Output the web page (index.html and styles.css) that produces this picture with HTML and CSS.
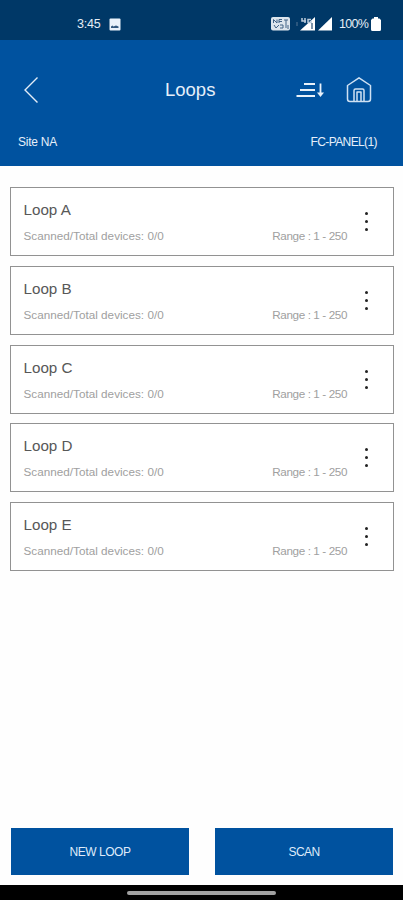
FILE: index.html
```
<!DOCTYPE html>
<html lang="en">
<head>
<meta charset="utf-8">
<title>Loops</title>
<link rel="stylesheet" href="styles.css">
</head>
<body>
<div class="status">
  <span class="time">3:45</span>
  <svg class="photo" width="12" height="13" viewBox="0 0 12 13"><rect x=".5" y=".5" width="11" height="12" rx="1" fill="#e9f1fa"/><path d="M2 10V8.500l1.500-1 1 1L7 7.500l2.500 1V10z" fill="#33587f"/></svg>
  <svg class="signals" width="62" height="16" viewBox="0 0 62 16">
    <rect x="0" y="1" width="19" height="13.500" rx="2" fill="#dce5ed"/>
    <path d="M2.500 7V3.500L6 7V3.500M8 7V3.500h3M8 5.500h3M13 4h4M15 4v8M3 9l2 3 3-3M9 9h3v3H9M17 9v4" fill="none" stroke="#416286" stroke-width="1"/>
    <path d="M26 6v4" stroke="#547594"/>
    <path d="M29 14.500L44 1v13.500z" fill="#fff"/>
    <path d="M31 2v3h4M34 2v5M40 3.500h-3v3h3V5" fill="none" stroke="#bdcddd" stroke-width="1.500"/>
    <path d="M41 7v6" stroke="#52718e" stroke-width="1.500"/>
    <path d="M47 14.500L61 1v13.500z" fill="#fff"/>
  </svg>
  <span class="percent">100%</span>
  <svg class="battery" width="10" height="14" viewBox="0 0 10 14"><path d="M3 0h4v1.500h1.500L10 3v9.500Q10 14 8.500 14h-7Q0 14 0 12.500V3l1.500-1.500H3z" fill="#fff"/></svg>
</div>
<header class="header">
  <div class="bar">
    <svg class="back" width="16" height="28" viewBox="0 0 16 28"><path d="M14.500 1.500L2 14l12.500 12.500" fill="none" stroke="#e3edf8" stroke-width="1.400"/></svg>
    <h1 class="title">Loops</h1>
    <svg class="sort" width="30" height="18" viewBox="0 0 30 18"><g fill="none" stroke="#e8f1fa" stroke-width="1.800"><path d="M8 3H19M4 9H19M.5 15H19M24.500 2.500v10"/></g><path d="M21 11.500h7L24.500 16z" fill="#e8f1fa"/></svg>
    <svg class="home" width="26" height="28" viewBox="0 0 26 28"><path d="M1.500 9.500L13 1.800 24.500 9.500V23q0 2.500-2.500 2.500H4Q1.500 25.500 1.500 23zM8 25.500v-11q0-1.500 1.500-1.500h7q1.500 0 1.500 1.500v11M11 25v-9h4v9" fill="none" stroke="#cfe1f3" stroke-width="1.500" stroke-linejoin="round"/></svg>
  </div>
  <div class="sub"><span class="site">Site NA</span><span class="panel">FC-PANEL(1)</span></div>
</header>
<main class="list">
  <section class="card"><div class="info"><h2>Loop A</h2><p><span class="devices">Scanned/Total devices: 0/0</span><span class="range">Range : 1 - 250</span></p></div><div class="menu"><i></i><i></i><i></i></div></section>
  <section class="card"><div class="info"><h2>Loop B</h2><p><span class="devices">Scanned/Total devices: 0/0</span><span class="range">Range : 1 - 250</span></p></div><div class="menu"><i></i><i></i><i></i></div></section>
  <section class="card"><div class="info"><h2>Loop C</h2><p><span class="devices">Scanned/Total devices: 0/0</span><span class="range">Range : 1 - 250</span></p></div><div class="menu"><i></i><i></i><i></i></div></section>
  <section class="card"><div class="info"><h2>Loop D</h2><p><span class="devices">Scanned/Total devices: 0/0</span><span class="range">Range : 1 - 250</span></p></div><div class="menu"><i></i><i></i><i></i></div></section>
  <section class="card"><div class="info"><h2>Loop E</h2><p><span class="devices">Scanned/Total devices: 0/0</span><span class="range">Range : 1 - 250</span></p></div><div class="menu"><i></i><i></i><i></i></div></section>
</main>
<footer class="actions"><button class="new">NEW LOOP</button><button class="scan">SCAN</button></footer>
<div class="nav"><div class="handle"></div></div>
</body>
</html>
```
FILE: styles.css
```
* { box-sizing: border-box; }
body {
  margin: 0;
  height: 900px;
  display: flex;
  flex-direction: column;
  overflow: hidden;
  background: #fefefe;
  font-family: "Liberation Sans", Arial, sans-serif;
}
h1, h2, p { margin: 0; font-weight: 400; }
svg { display: block; flex: none; }
span { white-space: nowrap; }
.status {
  height: 40px;
  flex: none;
  padding: 8px 22px 0 77px;
  display: flex;
  align-items: center;
  background: #003867;
  color: #e6eef6;
  font-size: 12.500px;
}
.time { width: 32px; letter-spacing: -0.200px; }
.signals { margin-left: auto; }
.percent { width: 32px; margin-left: 6px; font-size: 12.500px; letter-spacing: -0.700px; }
.header {
  height: 126px;
  flex: none;
  background: #00529f;
  color: #e6effa;
}
.bar {
  height: 100px;
  padding: 0 31px 0 23px;
  display: flex;
  align-items: center;
}
.title { margin-left: 126px; font-size: 18.500px; line-height: 24px; }
.sort { margin-left: auto; }
.home { margin-left: 20px; }
.sub {
  display: flex;
  justify-content: space-between;
  margin-top: -6px;
  padding: 0 26px 0 18px;
  font-size: 12px;
  line-height: 16px;
}
.site { letter-spacing: -0.250px; }
.panel { letter-spacing: -0.600px; }
.list {
  flex: 1;
  padding: 21px 9px 0 10px;
  display: flex;
  flex-direction: column;
  gap: 9.750px;
}
.card {
  height: 69px;
  flex: none;
  display: flex;
  border: 1px solid #929292;
  background: #fff;
}
.info { flex: 1; padding: 13px 0 0 12.500px; }
.info h2 { font-size: 15.200px; line-height: 18px; color: #585858; letter-spacing: 0; }
.info p {
  display: flex;
  justify-content: space-between;
  margin-top: 9px;
  font-size: 11.700px;
  line-height: 16px;
  color: #a0a0a0;
}
.devices { letter-spacing: 0.020px; }
.range { letter-spacing: -0.390px; }
.menu {
  width: 46px;
  padding: 24px 0 0 18px;
  display: flex;
  flex-direction: column;
  gap: 5px;
}
.menu i { width: 3px; height: 3px; border-radius: 50%; background: #222; }
.actions {
  height: 57px;
  flex: none;
  padding: 0 10px 10px 11px;
  display: grid;
  grid-template-columns: 178px 178px;
  justify-content: space-between;
}
button {
  height: 47px;
  padding: 0;
  border: 0;
  background: #00529f;
  color: #dfeafa;
  font: 12px/16px "Liberation Sans", Arial, sans-serif;
}
.new { letter-spacing: -0.450px; }
.scan { letter-spacing: -0.600px; }
.nav {
  height: 15px;
  flex: none;
  padding-top: 6px;
  background: #000;
}
.handle { width: 149px; height: 4px; margin-left: 127px; border-radius: 2px; background: #a1a1a1; }
```
